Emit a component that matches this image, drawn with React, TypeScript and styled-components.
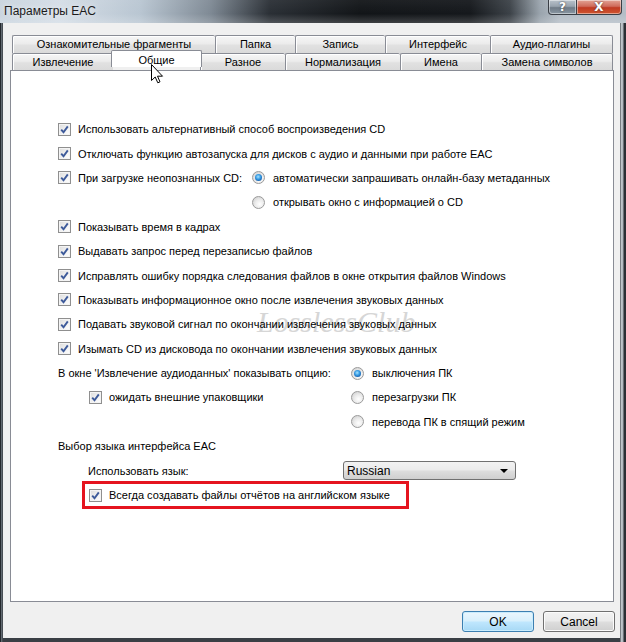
import React from "react";
import styled, { createGlobalStyle } from "styled-components";

const GlobalStyle = createGlobalStyle`
  html, body {
    margin:0;
    padding:0;
    background:#fff;
  }
  body {
    font-family:"Liberation Sans", Arial, sans-serif;
    font-size:11px;
    color:#000;
  }
`;

const Window = styled.div`
  width:626px;
  height:642px;
  position:relative;
  overflow:hidden;
  display:flex;
  flex-direction:column;
  background:linear-gradient(90deg, #24282d 0, #24282d 1px, #6f7880 1px, #3a3f45 3px, #3a3f45 620px, #2a2e33 620px, #c4c9ce 621px, #aeb4ba 623px, #2b2f34 624px);
`;

const TitleBar = styled.div`
  height:23px;
  flex:none;
  display:flex;
  align-items:flex-start;
  background:
    linear-gradient(180deg, rgba(255,255,255,0.05) 0, rgba(255,255,255,0) 60%, rgba(255,255,255,0.18) 100%),
    linear-gradient(90deg, #c9d4de 0, #d4dde6 60px, #b9c6d2 140px, #7f8a95 210px, #2a2f35 270px, #121518 360px, #15181c 470px, #3c4248 510px, #9aa4ad 540px, #b4bdc6 560px);
`;

const Title = styled.div`
  padding:4px 0 0 4px;
  font-size:12px;
  color:#1b1b1b;
  text-shadow:0 0 6px rgba(255,255,255,0.9);
`;

const CaptionButtons = styled.div`
  margin-left:auto;
  margin-right:4px;
  display:flex;
`;

const CaptionButton = styled.div<{ $close?: boolean }>`
  width:${p => (p.$close ? "45px" : "29px")};
  height:15px;
  box-sizing:border-box;
  border:1px solid #3a3f46;
  border-top:none;
  border-radius:${p => (p.$close ? "0 0 4px 0" : "0 0 0 4px")};
  ${p => (p.$close ? "border-left:none;" : "")}
  background:${p =>
    p.$close
      ? "linear-gradient(180deg, #e3a496 0, #cf6b5b 45%, #c03a23 55%, #d0562f 100%)"
      : "linear-gradient(180deg, #b9c2cb 0, #98a3ae 45%, #6f7b87 55%, #8a97a3 100%)"};
  box-shadow:inset 0 0 0 1px rgba(255,255,255,0.45);
  display:flex;
  align-items:center;
  justify-content:center;
  color:#fff;
  font-weight:bold;
  font-size:12px;
  font-family:"DejaVu Sans", sans-serif;
  text-shadow:0 0 2px #333;
`;

const ClientArea = styled.div`
  flex:1;
  margin:0 6px 4px 3px;
  background:#f0f0f0;
  display:flex;
  flex-direction:column;
  padding:12px 6px 0 7px;
`;

const TabStrip = styled.div`
  margin:0 1px 0 2px;
  display:flex;
  flex-direction:column;
`;

const TabRow = styled.div`
  display:flex;
`;

const Tab = styled.div<{ $w: number; $h: number; $active?: boolean }>`
  width:${p => p.$w}px;
  height:${p => p.$h}px;
  box-sizing:border-box;
  border:1px solid #898c95;
  border-bottom:none;
  border-right:none;
  border-radius:2px 2px 0 0;
  background:linear-gradient(180deg, #f6f6f6 0, #ececec 45%, #e1e1e1 55%, #dadada 100%);
  box-shadow:inset 1px 1px 0 #fff;
  display:flex;
  align-items:center;
  justify-content:center;
  padding-bottom:1px;
  white-space:nowrap;
  &:last-child {
    border-right:1px solid #898c95;
  }
  ${p =>
    p.$active &&
    `
    position:relative;
    z-index:1;
    background:#fff;
    box-shadow:none;
    border-right:1px solid #898c95;
    margin:-3px -2px -1px -2px;
    padding:1px 0 0 0;
  `}
`;

const Panel = styled.div`
  height:532px;
  flex:none;
  box-sizing:border-box;
  border:1px solid #898c95;
  background:#fff;
  position:relative;
  padding:46px 0 0 47px;
  display:flex;
  flex-direction:column;
`;

const Line = styled.div<{ $indent?: number }>`
  height:24.4px;
  display:flex;
  align-items:center;
  padding-left:${p => p.$indent || 0}px;
  white-space:nowrap;
  position:relative;
  z-index:1;
`;

const Group = styled.div`
  display:flex;
`;

const GroupLeft = styled.div<{ $w: number }>`
  width:${p => p.$w}px;
  flex:none;
  display:flex;
  flex-direction:column;
`;

const GroupRight = styled.div`
  display:flex;
  flex-direction:column;
`;

const Box = styled.span`
  width:13px;
  height:13px;
  flex:none;
  box-sizing:border-box;
  border:1px solid #8f8f8f;
  background:linear-gradient(135deg, #dcdcdc 0, #f3f3f3 60%, #ffffff 100%);
  box-shadow:inset 0 0 0 1px #f4f4f4;
  margin-right:7px;
  display:flex;
  align-items:center;
  justify-content:center;
`;

const RadioDot = styled.span<{ $on?: boolean }>`
  width:13px;
  height:13px;
  flex:none;
  box-sizing:border-box;
  border-radius:50%;
  border:1px solid #9a9a9a;
  background:radial-gradient(circle at 60% 65%, #ffffff 0, #ebebeb 45%, #c8c8c8 100%);
  margin-right:8px;
  display:flex;
  align-items:center;
  justify-content:center;
  &::after {
    content:"";
    display:${p => (p.$on ? "block" : "none")};
    width:7px;
    height:7px;
    border-radius:50%;
    background:radial-gradient(circle at 45% 40%, #a6e3ff 0, #3b9fe6 40%, #0f58a8 80%, #123c74 100%);
  }
`;

const Combo = styled.div`
  width:173px;
  height:19px;
  box-sizing:border-box;
  border:1px solid #707070;
  border-radius:3px;
  background:linear-gradient(180deg, #f2f2f2 0, #ebebeb 45%, #dddddd 55%, #cfcfcf 100%);
  display:flex;
  align-items:center;
  padding:0 7px 0 3px;
  justify-content:space-between;
  font-size:12px;
`;

const Arrow = styled.span`
  width:0;
  height:0;
  border-left:4px solid transparent;
  border-right:4px solid transparent;
  border-top:4px solid #000;
`;

const FixedLabel = styled.span<{ $w: number }>`
  width:${p => p.$w}px;
  flex:none;
`;

const Highlight = styled.div`
  margin-left:24px;
  width:327px;
  height:28px;
  box-sizing:border-box;
  border:3px solid #e5141f;
  display:flex;
  align-items:center;
  padding-left:4px;
  flex:none;
`;

const Watermark = styled.div`
  position:absolute;
  left:246px;
  top:234px;
  font-family:"Liberation Serif", serif;
  font-style:italic;
  font-size:30px;
  color:#d6d6d6;
  pointer-events:none;
  z-index:0;
`;

const Footer = styled.div`
  display:flex;
  justify-content:flex-end;
  gap:9px;
  padding-top:9px;
  margin-right:-1px;
`;

const Button = styled.div<{ $default?: boolean }>`
  width:72px;
  height:21px;
  box-sizing:border-box;
  border:1px solid ${p => (p.$default ? "#3c7fb1" : "#707070")};
  border-radius:3px;
  background:${p =>
    p.$default
      ? "linear-gradient(180deg, #eaf6fd 0, #d9f0fc 45%, #bee6fd 55%, #a7d9f5 100%)"
      : "linear-gradient(180deg, #f2f2f2 0, #ebebeb 45%, #dddddd 55%, #cfcfcf 100%)"};
  box-shadow:inset 0 0 0 1px ${p => (p.$default ? "#c9ecfd" : "#fbfbfb")};
  display:flex;
  align-items:center;
  justify-content:center;
  font-size:12px;
`;

const Cursor = styled.svg`
  position:absolute;
  left:151px;
  top:64px;
  z-index:5;
`;

function Check() {
  return (
    <Box>
      <svg width="9" height="9" viewBox="0 0 9 9">
        <path d="M1.2 4.6 L3.5 7.2 L7.8 1.4" fill="none" stroke="#3d5a9a" strokeWidth="1.9" />
      </svg>
    </Box>
  );
}

function CheckLine({ text, indent }: { text: string; indent?: number }) {
  return (
    <Line $indent={indent}>
      <Check />
      {text}
    </Line>
  );
}

function RadioLine({ text, on }: { text: string; on?: boolean }) {
  return (
    <Line>
      <RadioDot $on={on} />
      {text}
    </Line>
  );
}

const row1 = [
  ["Ознакомительные фрагменты", 203],
  ["Папка", 80],
  ["Запись", 90],
  ["Интерфейс", 105],
  ["Аудио-плагины", 123],
] as const;

const row2 = [
  ["Извлечение", 101],
  ["Общие", 91],
  ["Разное", 85],
  ["Нормализация", 115],
  ["Имена", 81],
  ["Замена символов", 132],
] as const;

export default function App() {
  return (
    <>
      <GlobalStyle />
      <Window>
        <TitleBar>
          <Title>Параметры EAC</Title>
          <CaptionButtons>
            <CaptionButton>?</CaptionButton>
            <CaptionButton $close>X</CaptionButton>
          </CaptionButtons>
        </TitleBar>

        <ClientArea>
          <TabStrip>
            <TabRow>
              {row1.map(([t, w]) => (
                <Tab key={t} $w={w} $h={18}>{t}</Tab>
              ))}
            </TabRow>
            <TabRow>
              {row2.map(([t, w]) => (
                <Tab key={t} $w={w} $h={17} $active={t === "Общие"}>{t}</Tab>
              ))}
            </TabRow>
          </TabStrip>

          <Panel>
            <Watermark>LosslessClub</Watermark>

            <CheckLine text="Использовать альтернативный способ воспроизведения CD" />
            <CheckLine text="Отключать функцию автозапуска для дисков с аудио и данными при работе EAC" />
            <Group>
              <GroupLeft $w={194}>
                <CheckLine text="При загрузке неопознанных CD:" />
              </GroupLeft>
              <GroupRight>
                <RadioLine on text="автоматически запрашивать онлайн-базу метаданных" />
                <RadioLine text="открывать окно с информацией о CD" />
              </GroupRight>
            </Group>
            <CheckLine text="Показывать время в кадрах" />
            <CheckLine text="Выдавать запрос перед перезаписью файлов" />
            <CheckLine text="Исправлять ошибку порядка следования файлов в окне открытия файлов Windows" />
            <CheckLine text="Показывать информационное окно после извлечения звуковых данных" />
            <CheckLine text="Подавать звуковой сигнал по окончании извлечения звуковых данных" />
            <CheckLine text="Изымать CD из дисковода по окончании извлечения звуковых данных" />
            <Group>
              <GroupLeft $w={293}>
                <Line>В окне 'Извлечение аудиоданных' показывать опцию:</Line>
                <CheckLine indent={31} text="ожидать внешние упаковщики" />
              </GroupLeft>
              <GroupRight>
                <RadioLine on text="выключения ПК" />
                <RadioLine text="перезагрузки ПК" />
                <RadioLine text="перевода ПК в спящий режим" />
              </GroupRight>
            </Group>
            <Line>Выбор языка интерфейса EAC</Line>
            <Line $indent={30}>
              <FixedLabel $w={255}>Использовать язык:</FixedLabel>
              <Combo>
                Russian
                <Arrow />
              </Combo>
            </Line>
            <Line>
              <Highlight>
                <Check />
                Всегда создавать файлы отчётов на английском языке
              </Highlight>
            </Line>
          </Panel>

          <Footer>
            <Button $default>OK</Button>
            <Button>Cancel</Button>
          </Footer>
        </ClientArea>

        <Cursor width="13" height="20" viewBox="0 0 13 20">
          <path d="M0.5 0.5 L0.5 16.5 L4.2 13 L6.8 18.8 L9 17.8 L6.5 12.2 L11.5 12.2 Z" fill="#fff" stroke="#000" strokeWidth="1" strokeLinejoin="round" />
        </Cursor>
      </Window>
    </>
  );
}
